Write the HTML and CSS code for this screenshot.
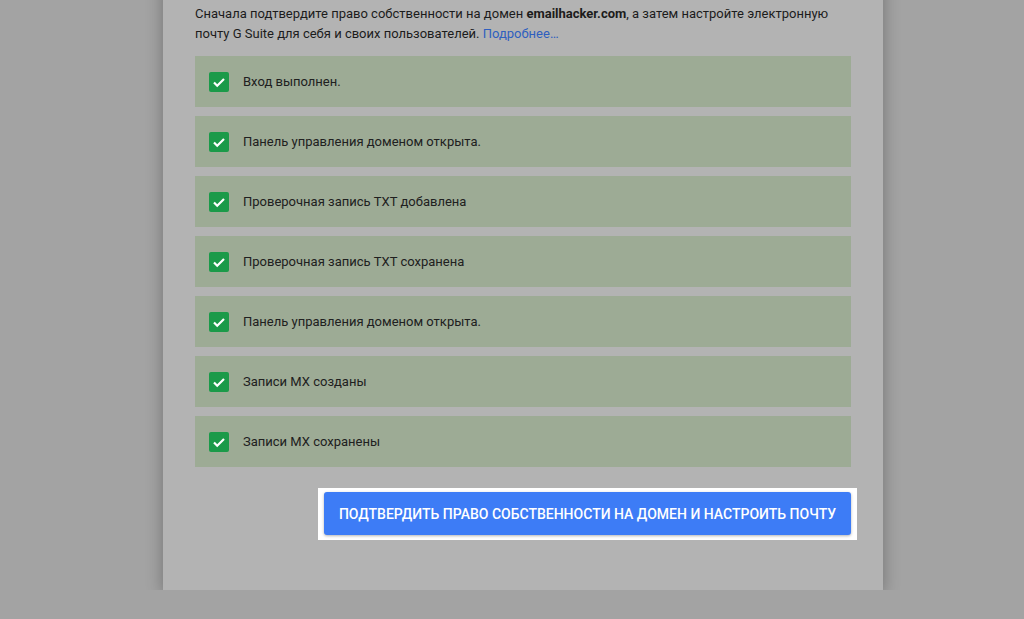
FILE: index.html
```html
<!DOCTYPE html>
<html lang="ru">
<head>
    <meta charset="UTF-8">
    <title>Подтверждение домена</title>
    <link rel="stylesheet" href="styles.css">
</head>
<body>
    <div class="card">
        <p class="intro">Сначала подтвердите право собственности на домен <b>emailhacker.com</b>, а затем настройте электронную почту G Suite для себя и своих пользователей. <a href="#">Подробнее…</a></p>
        <div class="steps">
            <div class="step"><span class="check"></span>Вход выполнен.</div>
            <div class="step"><span class="check"></span>Панель управления доменом открыта.</div>
            <div class="step"><span class="check"></span>Проверочная запись TXT добавлена</div>
            <div class="step"><span class="check"></span>Проверочная запись TXT сохранена</div>
            <div class="step"><span class="check"></span>Панель управления доменом открыта.</div>
            <div class="step"><span class="check"></span>Записи MX созданы</div>
            <div class="step"><span class="check"></span>Записи MX сохранены</div>
        </div>
        <div class="actions">
            <div class="highlight">
                <button class="btn">Подтвердить право собственности на домен и настроить почту</button>
            </div>
        </div>
    </div>
</body>
</html>
```

FILE: styles.css
```css
body {
    margin: 0;
    background: #a3a3a3;
    font-family: Roboto, 'Liberation Sans', sans-serif;
    overflow: hidden;
}
.card {
    width: 656px;
    margin: -20px 0 0 163px;
    background: #b3b3b3;
    padding: 24px 32px 50px 32px;
    box-shadow: 0 4px 16px rgba(0,0,0,0.3);
}
.intro {
    margin: 0 0 12px 0;
    font-size: 13px;
    line-height: 20px;
    color: #1c1c1c;
}
.intro b {
    font-weight: 700;
}
.intro a {
    color: #2f5fbf;
    text-decoration: none;
}
.steps {
    display: flex;
    flex-direction: column;
    gap: 9px;
}
.step {
    height: 51px;
    background: #9dab95;
    display: flex;
    align-items: center;
    gap: 14px;
    padding-left: 14px;
    font-size: 13px;
    color: #202020;
}
.check {
    width: 20px;
    height: 20px;
    border-radius: 2px;
    background: #1b9a49 url("data:image/svg+xml,%3Csvg xmlns='http://www.w3.org/2000/svg' viewBox='0 0 20 20'%3E%3Cpath d='M5 10.5l3.2 3.2L15 7' fill='none' stroke='%23fff' stroke-width='2.2'/%3E%3C/svg%3E") center/20px no-repeat;
}
.actions {
    display: flex;
    justify-content: flex-end;
    margin-top: 21px;
    margin-right: -6px;
}
.highlight {
    background: #fff;
    padding: 4px 6px 5px 6px;
}
.btn {
    display: block;
    height: 43px;
    padding: 0 15px;
    border: none;
    border-radius: 3px;
    background: #3d7cf6;
    color: #fff;
    font-family: Roboto, 'Liberation Sans', sans-serif;
    font-size: 14px;
    font-weight: 500;
    text-transform: uppercase;
    box-shadow: 0 1px 3px rgba(0,0,0,0.3);
    cursor: pointer;
}
```
